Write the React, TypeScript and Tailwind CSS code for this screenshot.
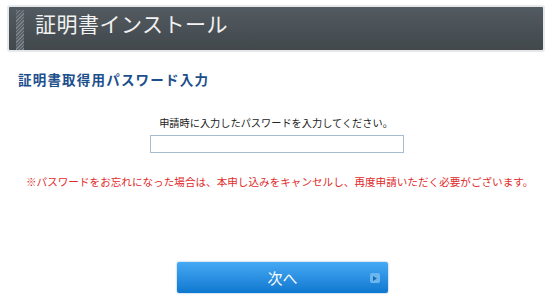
import React from "react";

export default function App() {
  return (
    <div
      className="w-[552px] h-[307px] bg-white overflow-hidden"
      style={{ fontFamily: '"Noto Sans CJK JP", "Noto Sans", sans-serif' }}
    >
      <div className="pt-[5px] pl-[7px] pr-[7px]">
        <div className="h-[47px] rounded-[3px] border-2 border-[#e6e8ea] bg-gradient-to-b from-[#525b61] to-[#42484c] flex items-stretch">
          <div
            className="ml-[7px] mt-[3px] w-[8px]"
            style={{
              background:
                "repeating-linear-gradient(135deg, #7d858b 0px, #7d858b 1px, #596166 1px, #596166 2.5px)",
            }}
          />
          <div className="ml-[11px] text-[21px] leading-none text-[#f2f2f2] pt-[6px] tracking-[0.5px]">
            証明書インストール
          </div>
        </div>
      </div>

      <div className="mt-[21px] pl-[18px] text-[13.5px] font-bold text-[#1c4f8c] leading-none tracking-[1.2px]">
        証明書取得用パスワード入力
      </div>

      <div className="mt-[31px] flex flex-col items-center">
        <div className="text-[10.2px] leading-none text-[#222]">
          申請時に入力したパスワードを入力してください。
        </div>
        <input
          type="text"
          className="mt-[7px] ml-[1px] w-[254px] h-[18px] border border-[#a9bccf] outline-none"
        />
      </div>

      <div className="mt-[24px] pl-[26px] text-[10.6px] leading-none text-[#e02b2b]">
        ※パスワードをお忘れになった場合は、本申し込みをキャンセルし、再度申請いただく必要がございます。
      </div>

      <div className="mt-[75px] flex justify-center">
        <div className="ml-[13px] relative w-[211px] h-[31px] rounded-[2px] bg-gradient-to-b from-[#45a9f5] to-[#0b78cf] shadow-[0_0_2px_rgba(0,80,160,0.5)] flex items-center justify-center">
          <span className="text-white text-[15px] leading-none">次へ</span>
          <div className="absolute right-[8px] top-[11px] w-[10px] h-[10px] rounded-[2px] bg-[#6bb6ee] flex items-center justify-center">
            <svg width="4" height="5" viewBox="0 0 4 5">
              <path d="M0 0 L4 2.5 L0 5 Z" fill="#1a6bb0" />
            </svg>
          </div>
        </div>
      </div>
    </div>
  );
}
